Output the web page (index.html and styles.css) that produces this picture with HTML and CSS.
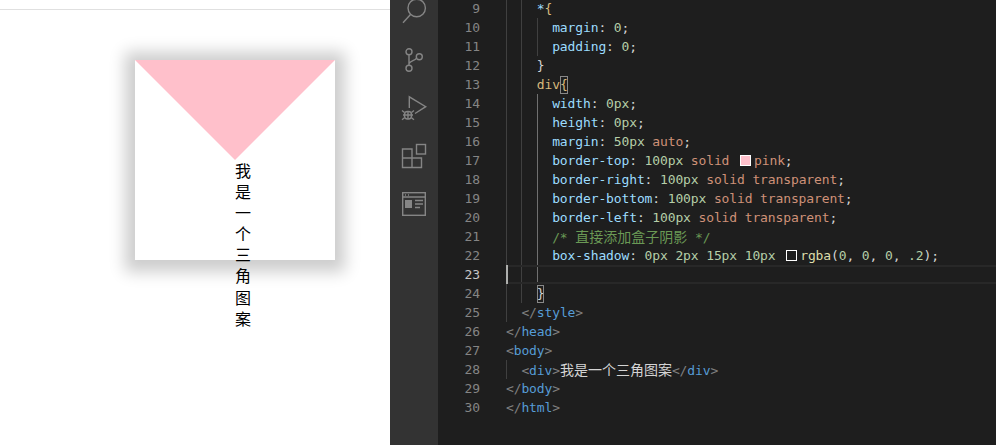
FILE: index.html
```html
<!DOCTYPE html>
<html lang="zh">
<head>
<meta charset="utf-8">
<title>三角图案</title>
<link rel="stylesheet" href="styles.css">
</head>
<body>
<main class="app">
  <section class="preview">
    <div class="browser-rule"></div>
    <div class="triangle">我是一个三角图案</div>
  </section>
  <nav class="activity">
    <svg class="icon" viewBox="0 0 24 24"><circle cx="14.7" cy="8" r="8.7"/><path d="M8.5 14.5L1 22.8"/></svg>
    <svg class="icon" viewBox="0 0 24 24"><circle cx="7" cy="3.8" r="3"/><circle cx="17.3" cy="8.8" r="3"/><circle cx="7" cy="20.3" r="3"/><path d="M7 6.8V17.3M14.6 10.2C12.5 13 9 12.5 7 15.5"/></svg>
    <svg class="icon" viewBox="0 0 24 24"><path d="M7.3 12V.8L23.7 10.7L13 17.5"/><rect x="2.5" y="15.5" width="7" height="7.5" rx="3"/><path d="M0 14.5L2.5 16.5M12 14.5L9.5 16.5M0 23.8L2.5 21.8M12 23.8L9.5 21.8M1 19H11M6 15.5V23"/></svg>
    <svg class="icon" viewBox="0 0 24 24"><rect x="14.5" y="0.5" width="9" height="9.5"/><path d="M.5 5H10V23.5H.5ZM.5 14H19.5V23.5H10"/></svg>
    <svg class="icon" viewBox="0 0 24 24"><rect x="0.7" y="0.7" width="22.6" height="22.6"/><path d="M1 5H23M3 3H4M6 3H7"/><rect class="fill" x="3" y="8" width="7" height="8"/><path d="M13 8.5H21M13 12H21M13 15.5H18"/></svg>
  </nav>
  <section class="editor">
    <div class="line"><span class="num">9</span><span class="code"><span class="g"></span><span class="g"></span><span class="prop">*</span><span class="sel">{</span></span></div>
    <div class="line"><span class="num">10</span><span class="code"><span class="g"></span><span class="g"></span><span class="g"></span><span class="prop">margin</span>: <span class="val">0</span>;</span></div>
    <div class="line"><span class="num">11</span><span class="code"><span class="g"></span><span class="g"></span><span class="g"></span><span class="prop">padding</span>: <span class="val">0</span>;</span></div>
    <div class="line"><span class="num">12</span><span class="code"><span class="g"></span><span class="g"></span><span class="brace">}</span></span></div>
    <div class="line"><span class="num">13</span><span class="code"><span class="g"></span><span class="g"></span><span class="sel">div</span><span class="match sel">{</span></span></div>
    <div class="line"><span class="num">14</span><span class="code"><span class="g"></span><span class="g"></span><span class="g on"></span><span class="prop">width</span>: <span class="val">0px</span>;</span></div>
    <div class="line"><span class="num">15</span><span class="code"><span class="g"></span><span class="g"></span><span class="g on"></span><span class="prop">height</span>: <span class="val">0px</span>;</span></div>
    <div class="line"><span class="num">16</span><span class="code"><span class="g"></span><span class="g"></span><span class="g on"></span><span class="prop">margin</span>: <span class="val">50px</span> <span class="str">auto</span>;</span></div>
    <div class="line"><span class="num">17</span><span class="code"><span class="g"></span><span class="g"></span><span class="g on"></span><span class="prop">border-top</span>: <span class="val">100px</span> <span class="str">solid</span> <span class="swatch pink"></span><span class="str">pink</span>;</span></div>
    <div class="line"><span class="num">18</span><span class="code"><span class="g"></span><span class="g"></span><span class="g on"></span><span class="prop">border-right</span>: <span class="val">100px</span> <span class="str">solid transparent</span>;</span></div>
    <div class="line"><span class="num">19</span><span class="code"><span class="g"></span><span class="g"></span><span class="g on"></span><span class="prop">border-bottom</span>: <span class="val">100px</span> <span class="str">solid transparent</span>;</span></div>
    <div class="line"><span class="num">20</span><span class="code"><span class="g"></span><span class="g"></span><span class="g on"></span><span class="prop">border-left</span>: <span class="val">100px</span> <span class="str">solid transparent</span>;</span></div>
    <div class="line"><span class="num">21</span><span class="code"><span class="g"></span><span class="g"></span><span class="g on"></span><span class="com">/* <span class="cjk">直接添加盒子阴影</span> */</span></span></div>
    <div class="line"><span class="num">22</span><span class="code"><span class="g"></span><span class="g"></span><span class="g on"></span><span class="prop">box-shadow</span>: <span class="val">0px 2px 15px 10px</span> <span class="swatch ink"></span><span class="fn">rgba</span>(<span class="val">0</span>, <span class="val">0</span>, <span class="val">0</span>, <span class="val">.2</span>);</span></div>
    <div class="line current"><span class="num">23</span><span class="code"><span class="caret"></span><span class="g"></span><span class="g"></span><span class="g on"></span></span></div>
    <div class="line"><span class="num">24</span><span class="code"><span class="g"></span><span class="g"></span><span class="match brace">}</span></span></div>
    <div class="line"><span class="num">25</span><span class="code"><span class="g"></span><span class="p">&lt;/</span><span class="tag">style</span><span class="p">&gt;</span></span></div>
    <div class="line"><span class="num">26</span><span class="code"><span class="p">&lt;/</span><span class="tag">head</span><span class="p">&gt;</span></span></div>
    <div class="line"><span class="num">27</span><span class="code"><span class="p">&lt;</span><span class="tag">body</span><span class="p">&gt;</span></span></div>
    <div class="line"><span class="num">28</span><span class="code"><span class="g"></span><span class="p">&lt;</span><span class="tag">div</span><span class="p">&gt;</span><span class="cjk">我是一个三角图案</span><span class="p">&lt;/</span><span class="tag">div</span><span class="p">&gt;</span></span></div>
    <div class="line"><span class="num">29</span><span class="code"><span class="p">&lt;/</span><span class="tag">body</span><span class="p">&gt;</span></span></div>
    <div class="line"><span class="num">30</span><span class="code"><span class="p">&lt;/</span><span class="tag">html</span><span class="p">&gt;</span></span></div>
  </section>
</main>
</body>
</html>
```
FILE: styles.css
```css
* {
  box-sizing: border-box;
}

html,
body {
  margin: 0;
  height: 100%;
  overflow: hidden;
}

.app {
  display: flex;
  width: 996px;
  height: 445px;
  overflow: hidden;
}

.preview {
  flex: 0 0 390px;
  background: #fff;
  overflow: hidden;
}

.browser-rule {
  height: 10px;
  border-bottom: 1px solid #e0e0e0;
}

.triangle {
  box-sizing: content-box;
  width: 0;
  height: 0;
  margin: 50px 0 0 135px;
  border-top: 100px solid pink;
  border-right: 100px solid transparent;
  border-bottom: 100px solid transparent;
  border-left: 100px solid transparent;
  box-shadow: 0 2px 15px 10px rgba(0, 0, 0, .2);
  color: #000;
  font: 16px/21.1px "Noto Sans CJK SC", sans-serif;
}

.activity {
  flex: 0 0 48px;
  display: flex;
  flex-direction: column;
  align-items: flex-start;
  gap: 24px;
  padding-left: 12px;
  background: #333;
}

.icon {
  flex: none;
  width: 24px;
  height: 24px;
  fill: none;
  stroke: #858585;
  stroke-width: 1.4;
  overflow: visible;
}

.icon .fill {
  fill: #858585;
  stroke: none;
}

.editor {
  flex: 1;
  margin-top: -1px;
  background: #1e1e1e;
  color: #d4d4d4;
  font: 13px/19px "DejaVu Sans Mono", monospace;
  letter-spacing: -0.126px;
}

.line {
  display: flex;
  height: 19px;
  white-space: pre;
}

.num {
  flex: 0 0 68px;
  padding-right: 26px;
  text-align: right;
  color: #858585;
}

.code {
  position: relative;
  flex: 1;
  display: block;
}

.current .num {
  color: #c6c6c6;
}

.current .code {
  border-top: 2px solid #282828;
  border-bottom: 2px solid #282828;
}

.caret {
  position: absolute;
  left: 0;
  top: -2px;
  bottom: -2px;
  width: 2px;
  background: #aeafad;
}

.g {
  display: inline-block;
  width: 15.4px;
  height: 19px;
  vertical-align: top;
  border-left: 1px solid #404040;
}

.g.on {
  border-left-color: #707070;
}

.current .g {
  height: 15px;
}

.sel { color: #d7ba7d; }
.brace { color: #d4d4d4; }
.prop { color: #9cdcfe; }
.val { color: #b5cea8; }
.str { color: #ce9178; }
.fn { color: #dcdcaa; }
.com { color: #6a9955; }
.tag { color: #569cd6; }
.p { color: #808080; }

.cjk {
  font-family: "Noto Sans CJK SC", sans-serif;
  font-size: 14px;
  line-height: 19px;
  letter-spacing: 0;
}

.match {
  display: inline-block;
  height: 18px;
  line-height: 18px;
  outline: 1px solid #888;
  outline-offset: -1px;
}

.swatch {
  display: inline-block;
  width: 11px;
  height: 11px;
  margin: 0 3px;
  vertical-align: -1px;
  border: 1px solid #fff;
}

.swatch.pink { background: pink; }
.swatch.ink { background: #1e1e1e; }
```
